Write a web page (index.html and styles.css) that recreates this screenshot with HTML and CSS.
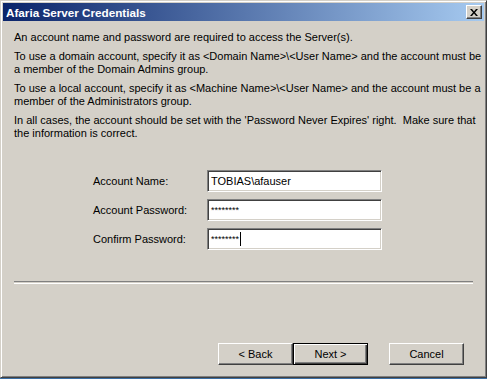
FILE: index.html
```html
<!DOCTYPE html>
<html>
<head>
    <link rel="stylesheet" href="styles.css">
</head>
<body>
    <div class="window">
        <div class="titlebar">
            <span class="title">Afaria Server Credentials</span>
            <div class="close-btn">
                <svg width="8" height="7" viewBox="0 0 8 7">
                    <path d="M0 0h2l2 2.5l2-2.5h2l-3 3.5l3 3.5h-2l-2-2.5l-2 2.5h-2l3-3.5z" fill="#000"/>
                </svg>
            </div>
        </div>

        <div class="intro">
            <p>An account name and password are required to access the Server(s).</p>
            <p>To use a domain account, specify it as &lt;Domain Name&gt;\&lt;User Name&gt; and the account must be<br>a member of the Domain Admins group.</p>
            <p>To use a local account, specify it as &lt;Machine Name&gt;\&lt;User Name&gt; and the account must be a<br>member of the Administrators group.</p>
            <p>In all cases, the account should be set with the 'Password Never Expires' right.&nbsp; Make sure that<br>the information is correct.</p>
        </div>

        <div class="form">
            <label>Account Name:</label>
            <div class="field">TOBIAS\afauser</div>
            <label>Account Password:</label>
            <div class="field secret">********</div>
            <label>Confirm Password:</label>
            <div class="field secret">********<span class="caret"></span></div>
        </div>

        <div class="separator"></div>

        <div class="buttons">
            <button class="btn">&lt; Back</button>
            <button class="btn default">Next &gt;</button>
            <button class="btn cancel">Cancel</button>
        </div>
    </div>
</body>
</html>
```

FILE: styles.css
```css
body {
  margin: 0;
  background: #3a6ea5;
  font-family: "Liberation Sans", Arial, sans-serif;
  font-size: 11px;
  color: #000;
}

.window {
  box-sizing: border-box;
  width: 487px;
  height: 378px;
  background: #d4d0c8;
  border: 1px solid;
  border-color: #d4d0c8 #404040 #404040 #d4d0c8;
  box-shadow: inset 1px 1px #fff, inset -1px -1px #808080;
  padding: 2px;
  display: flex;
  flex-direction: column;
}

.titlebar {
  height: 18px;
  display: flex;
  align-items: center;
  justify-content: space-between;
  padding-left: 3px;
  background: linear-gradient(to right, #0a246a, #a6caf0);
}

.title {
  color: #fff;
  font-weight: bold;
  font-size: 11.7px;
}

.close-btn {
  box-sizing: border-box;
  width: 16px;
  height: 14px;
  margin-right: 2px;
  background: #d4d0c8;
  border: 1px solid;
  border-color: #fff #404040 #404040 #fff;
  box-shadow: inset -1px -1px #808080;
  display: flex;
  align-items: center;
  justify-content: center;
}

.intro {
  padding: 10px 11px 0 11px;
  white-space: nowrap;
}

.intro p {
  margin: 0 0 6px 0;
  line-height: 13px;
}

.form {
  display: grid;
  grid-template-columns: 114px 175px;
  row-gap: 7px;
  align-items: center;
  margin-top: 24px;
  margin-left: 90px;
}

.field {
  box-sizing: border-box;
  height: 22px;
  background: #fff;
  border: 1px solid;
  border-color: #808080 #fff #fff #808080;
  box-shadow: inset 1px 1px #404040, inset -1px -1px #d4d0c8;
  padding: 3px 3px 0 3px;
  line-height: 15px;
  display: flex;
  align-items: flex-start;
}

.secret {
  font-size: 9px;
}

.caret {
  display: inline-block;
  width: 1px;
  height: 14px;
  background: #000;
  margin-left: 1px;
}

.separator {
  margin: 31px 11px 0 11px;
  height: 1px;
  border-top: 1px solid #808080;
  border-bottom: 1px solid #fff;
}

.buttons {
  display: flex;
  justify-content: flex-end;
  margin-top: 59px;
  padding-right: 20px;
}

.btn {
  box-sizing: border-box;
  width: 75px;
  height: 22px;
  font-family: "Liberation Sans", Arial, sans-serif;
  font-size: 11px;
  color: #000;
  background: #d4d0c8;
  border: 1px solid;
  border-color: #fff #404040 #404040 #fff;
  box-shadow: inset -1px -1px #808080;
  padding: 0;
}

.btn.default {
  border: 1px solid #000;
  box-shadow: inset 1px 1px #fff, inset -1px -1px #404040, inset -2px -2px #808080;
}

.btn.cancel {
  margin-left: 21px;
}
```
